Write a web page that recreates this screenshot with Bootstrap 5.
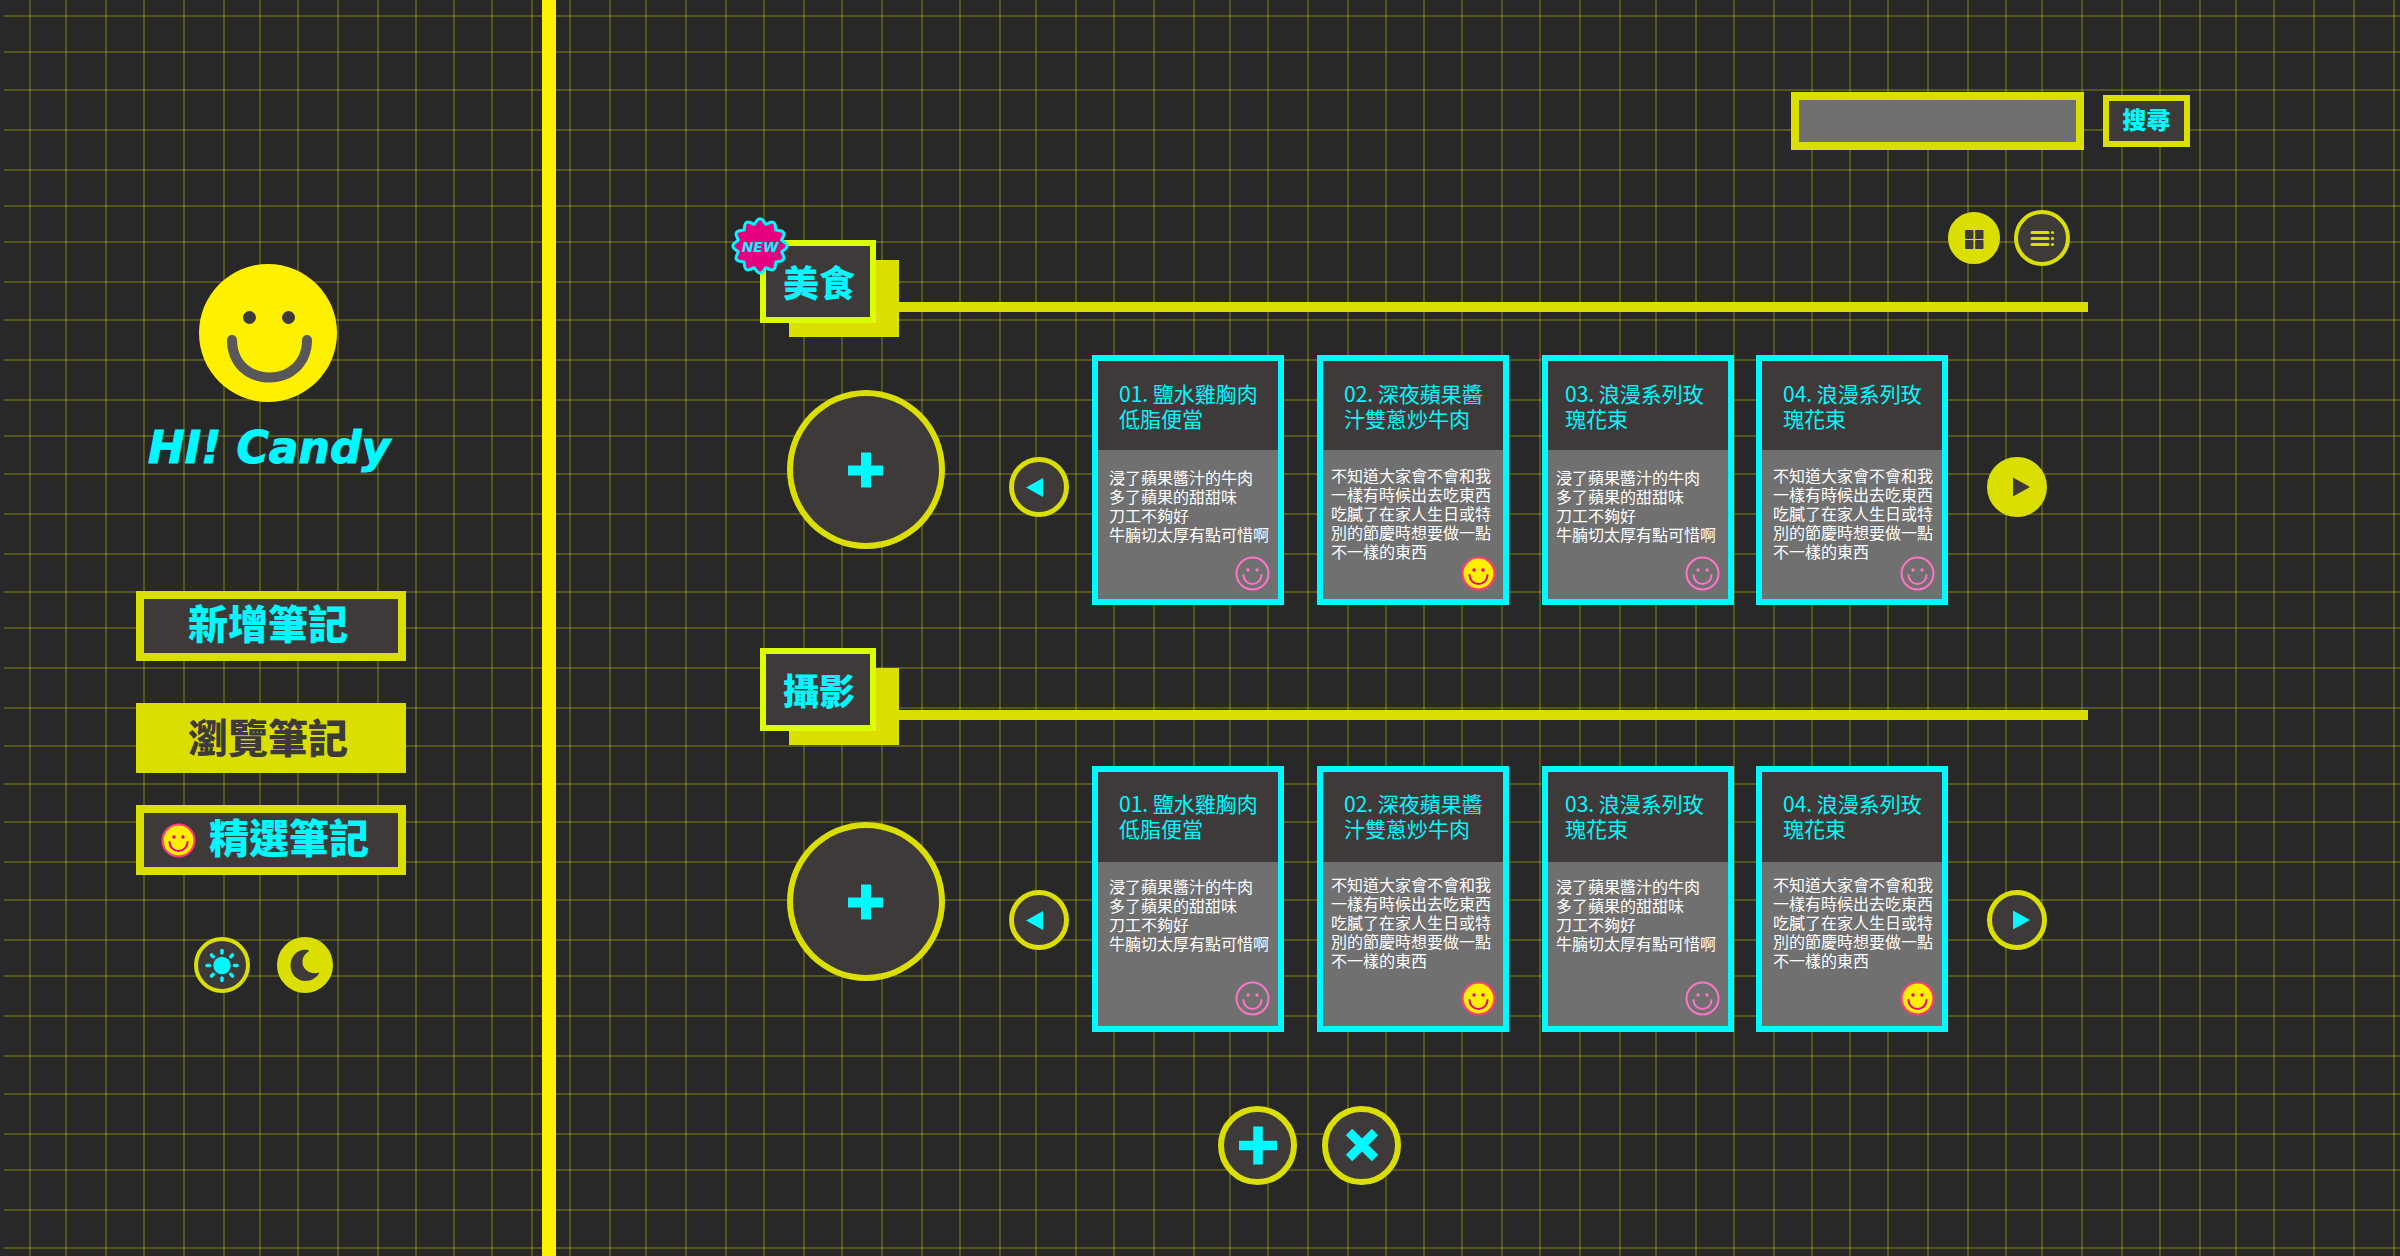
<!DOCTYPE html>
<html lang="zh-Hant">
<head>
<meta charset="utf-8">
<meta name="viewport" content="width=device-width, initial-scale=1">
<title>Candy 筆記</title>
<link href="https://cdn.jsdelivr.net/npm/bootstrap@5.3.0/dist/css/bootstrap.min.css" rel="stylesheet">
<style>
:root { --ink:#282828; --coal:#3e3a39; --lime:#dbdf00; --neon:#dcff00; --sun:#fff000; --aqua:#00f8ff; --ash:#717071; }
body { background:var(--ink); color:var(--aqua); font-family:"Noto Sans CJK TC","Noto Sans",sans-serif; }
.grid-bg { z-index:-1; }
.shell { min-height:100vh; }
.side { flex:0 0 556px; border-right:14px solid var(--sun); padding:264px 0 0 136px; }
.face-lg { width:138px; height:138px; margin-left:63px; }
.greet { font-family:"DejaVu Sans","Liberation Sans",sans-serif; font-weight:700; font-style:italic; font-size:44px; line-height:56px; margin:18px 0 0 12px; -webkit-text-stroke:1px var(--aqua); }
.side-nav { width:270px; margin-top:115px; }
.side-link { height:70px; border:8px solid var(--lime); background:var(--coal); color:var(--aqua); font-weight:900; font-size:40px; line-height:46px; padding:0 0 8px 44px; text-decoration:none; margin-bottom:42px; }
.side-link.current { background:var(--lime); color:var(--coal); padding-bottom:4px; margin-bottom:32px; }
.side-link.pick { padding:0 0 8px 17px; gap:13px; margin-bottom:62px; }
.pick svg { width:35px; height:35px; margin-top:8px; }
.round { border:5px solid var(--lime); border-radius:50%; background:var(--coal); color:var(--aqua); padding:0; display:block; flex:none; }
.round svg { display:block; width:100%; height:100%; }
.round.solid { background:var(--lime); color:var(--coal); }
.r56 { width:56px; height:56px; border-width:4px; }
.r52 { width:52px; height:52px; border-width:4px; }
.r60 { width:60px; height:60px; }
.r80 { width:79px; height:79px; border-width:6px; }
.r158 { width:158px; height:159px; border-width:6px; }
.themes { gap:27px; padding-left:58px; }
.main { min-width:0; padding:92px 210px 70px 204px; }
.find { gap:19px; }
.find-box { width:293px; height:58px; border:8px solid var(--lime); border-radius:0; background:var(--ash); color:#fff; padding:0 12px; }
.find-btn { width:87px; height:52px; border:6px solid var(--lime); background:var(--coal); color:var(--aqua); font-weight:900; font-size:24px; line-height:36px; padding:0 0 4px; }
.views { gap:14px; margin:60px 120px 0 0; z-index:1; }
.board { margin:-26px 102px 0 0; }
.board + .board { margin-top:43px; }
.board-tag { width:116px; height:83px; border:6px solid var(--neon); background:var(--coal); box-shadow:26px 17px 0 -3px var(--lime); font-weight:900; font-size:36px; line-height:1; margin:0; padding:0 0 2px 2px; z-index:1; }
.board-rule { height:10px; background:var(--lime); margin-top:62px; }
.new-badge { width:60px; height:60px; left:-36px; top:-30px; }
.new-badge text { font:italic 700 14px "DejaVu Sans","Liberation Sans",sans-serif; fill:var(--aqua); }
.shelf { padding:32px 41px 0 27px; }
.shelf .add { margin:35px 64px 0 0; }
.shelf .step { margin-top:102px; }
.shelf .cards { margin:0 39px 0 23px; }
.note { width:192px; height:250px; border:6px solid var(--aqua); background:var(--ash); margin-right:33px; }
.note:nth-child(3) { margin-right:22px; }
.note:last-child { margin-right:0; }
.note-top { height:89px; background:var(--coal); color:var(--aqua); font-size:21px; font-weight:400; line-height:25px; padding:20px 0 0 21px; margin:0; }
.note:nth-child(3) .note-top { padding-left:17px; }
.note-text { color:#fff; font-size:16px; font-weight:400; line-height:19px; padding:18px 0 0 11px; margin:0; white-space:nowrap; }
.note:nth-child(2n) .note-text { padding-top:16px; }
.note:nth-child(2) .note-text, .note:nth-child(3) .note-text { padding-left:8px; }
.fav { width:35px; height:35px; right:8px; bottom:8px; border:0; background:none; padding:0; }
.note:nth-child(2n) .fav { right:7px; }
.fav svg { display:block; }
.tall .add { margin-top:56px; }
.tall .step { margin-top:124px; }
.tall { padding-top:35px; }
.tall .note { height:266px; }
.tall .note-top { height:90px; padding-top:19px; }
.tall .note-text { padding-top:15px; }
.tall .note:nth-child(2n) .note-text { padding-top:13px; }
.tall .fav { bottom:10px; }
.foot { gap:25px; padding:74px 0 0 458px; }
</style>
</head>
<body>
<svg class="d-none">
  <symbol id="smile-line" viewBox="0 0 35 35"><circle cx="17.500" cy="17.500" r="16" fill="none" stroke="#ff73c8" stroke-width="2"/><circle cx="13" cy="14" r="1.700" fill="#ff73c8"/><circle cx="22" cy="14" r="1.700" fill="#ff73c8"/><path d="M8.500 19a9 9 0 0 0 18 0" fill="none" stroke="#ff73c8" stroke-width="2" stroke-linecap="round"/></symbol>
  <symbol id="smile-full" viewBox="0 0 35 35"><circle cx="17.500" cy="17.500" r="16" fill="#fff000" stroke="#ff3c78" stroke-width="2.200"/><circle cx="13" cy="14" r="1.700" fill="#e4007f"/><circle cx="22" cy="14" r="1.700" fill="#e4007f"/><path d="M8.500 19a9 9 0 0 0 18 0" fill="none" stroke="#e4007f" stroke-width="2" stroke-linecap="round"/></symbol>
  <symbol id="tri-left" viewBox="0 0 50 50"><path d="M12 25.500 29 16v19z" fill="currentColor"/></symbol>
  <symbol id="tri-right" viewBox="0 0 50 50"><path d="M38 25 21 15.500v19z" fill="currentColor"/></symbol>
</svg>
<svg class="grid-bg position-absolute top-0 start-0 w-100 h-100" aria-hidden="true">
  <defs><pattern id="net" width="2400" height="1256" patternUnits="userSpaceOnUse">
    <g id="net-lines" fill="none" stroke="#dbdf00" stroke-opacity=".25" stroke-width="2"></g>
  </pattern></defs>
  <rect width="100%" height="100%" fill="url(#net)"/>
</svg>

<div class="shell d-flex">
  <aside class="side">
    <svg class="face-lg d-block" viewBox="0 0 138 138" role="img" aria-label="Candy"><circle cx="69" cy="69" r="69" fill="#fff000"/><circle cx="50.500" cy="53.500" r="6.500" fill="#3e3a39"/><circle cx="89.500" cy="53.500" r="6.500" fill="#3e3a39"/><path d="M28 76a5 5 0 0 1 10 0C38 97 53 108.500 70.500 108.500S103 97 103 76a5 5 0 0 1 10 0C113 102 94 118.500 70.500 118.500S28 102 28 76z" fill="#595757"/></svg>
    <h1 class="greet">HI! Candy</h1>
    <nav class="side-nav">
      <a href="#" class="side-link d-flex align-items-center">新增筆記</a>
      <a href="#" class="side-link current d-flex align-items-center" aria-current="page">瀏覽筆記</a>
      <a href="#" class="side-link pick d-flex align-items-center"><svg><use href="#smile-full"/></svg>精選筆記</a>
    </nav>
    <div class="themes d-flex">
      <button type="button" class="round r56" aria-label="淺色"><svg viewBox="0 0 48 48"><circle cx="24" cy="24.500" r="8.700" fill="currentColor"/><g stroke="currentColor" stroke-width="3.600" stroke-linecap="round"><path d="M24 9.500v2.500M24 37v2.500M9 24.500h2.500M36.500 24.500H39M13.500 14l1.700 1.700M32.800 33.300l1.700 1.700M34.500 14l-1.700 1.700M15.200 33.300 13.500 35"/></g></svg></button>
      <button type="button" class="round solid r56" aria-label="深色"><svg viewBox="0 0 48 48"><path d="M27 9C16 7 9.500 16 9.500 24.500 9.500 33 16 40 24.500 40c6 0 11-3 14-8.500-8 2.500-17-2-17-10.500 0-5 2.500-8 6.500-11z" fill="currentColor"/></svg></button>
    </div>
  </aside>

  <main class="main flex-grow-1">
    <form class="find d-flex justify-content-end align-items-center">
      <input type="search" class="find-box" aria-label="搜尋筆記">
      <button type="button" class="find-btn">搜尋</button>
    </form>
    <div class="views d-flex justify-content-end align-items-center position-relative">
      <button type="button" class="round solid r52" aria-label="格狀"><svg viewBox="0 0 44 44"><g fill="currentColor"><rect x="13" y="14" width="8.500" height="9" rx="1"/><rect x="23" y="14" width="8.500" height="9" rx="1"/><rect x="13" y="24" width="8.500" height="9" rx="1"/><rect x="23" y="24" width="8.500" height="9" rx="1"/></g></svg></button>
      <button type="button" class="round r56" aria-label="清單"><svg viewBox="0 0 48 48"><g stroke="#dbdf00" stroke-width="3" stroke-linecap="round"><path d="M14 18.500h16M14 24.500h16M14 30.500h16M34.500 18.500h.1M34.500 24.500h.1M34.500 30.500h.1"/></g></svg></button>
    </div>

    <section class="board">
      <div class="d-flex align-items-start">
        <h2 class="board-tag d-flex align-items-center justify-content-center position-relative">美食
          <svg class="new-badge position-absolute" viewBox="0 0 60 60"><path id="burst" fill="#e4007f" stroke="#00f8ff" stroke-width="3" stroke-linejoin="round"/><text x="30" y="36" text-anchor="middle">NEW</text></svg>
        </h2>
        <div class="board-rule flex-grow-1"></div>
      </div>
      <div class="shelf d-flex align-items-start">
        <button type="button" class="add round r158" aria-label="新增"><svg viewBox="0 0 146 146"><path d="M73 56v35M55 74h35" stroke="currentColor" stroke-width="10"/></svg></button>
        <button type="button" class="step round r60" aria-label="上一頁"><svg><use href="#tri-left"/></svg></button>
        <div class="cards d-flex flex-grow-1">
          <article class="note position-relative"><h3 class="note-top">01. 鹽水雞胸肉<br>低脂便當</h3><p class="note-text">浸了蘋果醬汁的牛肉<br>多了蘋果的甜甜味<br>刀工不夠好<br>牛腩切太厚有點可惜啊</p><button type="button" class="fav position-absolute" aria-label="精選"><svg width="35" height="35"><use href="#smile-line"/></svg></button></article>
          <article class="note position-relative"><h3 class="note-top">02. 深夜蘋果醬<br>汁雙蔥炒牛肉</h3><p class="note-text">不知道大家會不會和我<br>一樣有時候出去吃東西<br>吃膩了在家人生日或特<br>別的節慶時想要做一點<br>不一樣的東西</p><button type="button" class="fav position-absolute" aria-label="精選"><svg width="35" height="35"><use href="#smile-full"/></svg></button></article>
          <article class="note position-relative"><h3 class="note-top">03. 浪漫系列玫<br>瑰花束</h3><p class="note-text">浸了蘋果醬汁的牛肉<br>多了蘋果的甜甜味<br>刀工不夠好<br>牛腩切太厚有點可惜啊</p><button type="button" class="fav position-absolute" aria-label="精選"><svg width="35" height="35"><use href="#smile-line"/></svg></button></article>
          <article class="note position-relative"><h3 class="note-top">04. 浪漫系列玫<br>瑰花束</h3><p class="note-text">不知道大家會不會和我<br>一樣有時候出去吃東西<br>吃膩了在家人生日或特<br>別的節慶時想要做一點<br>不一樣的東西</p><button type="button" class="fav position-absolute" aria-label="精選"><svg width="35" height="35"><use href="#smile-line"/></svg></button></article>
        </div>
        <button type="button" class="step round solid r60" aria-label="下一頁"><svg><use href="#tri-right"/></svg></button>
      </div>
    </section>

    <section class="board">
      <div class="d-flex align-items-start">
        <h2 class="board-tag d-flex align-items-center justify-content-center position-relative">攝影</h2>
        <div class="board-rule flex-grow-1"></div>
      </div>
      <div class="shelf tall d-flex align-items-start">
        <button type="button" class="add round r158" aria-label="新增"><svg viewBox="0 0 146 146"><path d="M73 56v35M55 74h35" stroke="currentColor" stroke-width="10"/></svg></button>
        <button type="button" class="step round r60" aria-label="上一頁"><svg><use href="#tri-left"/></svg></button>
        <div class="cards d-flex flex-grow-1">
          <article class="note position-relative"><h3 class="note-top">01. 鹽水雞胸肉<br>低脂便當</h3><p class="note-text">浸了蘋果醬汁的牛肉<br>多了蘋果的甜甜味<br>刀工不夠好<br>牛腩切太厚有點可惜啊</p><button type="button" class="fav position-absolute" aria-label="精選"><svg width="35" height="35"><use href="#smile-line"/></svg></button></article>
          <article class="note position-relative"><h3 class="note-top">02. 深夜蘋果醬<br>汁雙蔥炒牛肉</h3><p class="note-text">不知道大家會不會和我<br>一樣有時候出去吃東西<br>吃膩了在家人生日或特<br>別的節慶時想要做一點<br>不一樣的東西</p><button type="button" class="fav position-absolute" aria-label="精選"><svg width="35" height="35"><use href="#smile-full"/></svg></button></article>
          <article class="note position-relative"><h3 class="note-top">03. 浪漫系列玫<br>瑰花束</h3><p class="note-text">浸了蘋果醬汁的牛肉<br>多了蘋果的甜甜味<br>刀工不夠好<br>牛腩切太厚有點可惜啊</p><button type="button" class="fav position-absolute" aria-label="精選"><svg width="35" height="35"><use href="#smile-line"/></svg></button></article>
          <article class="note position-relative"><h3 class="note-top">04. 浪漫系列玫<br>瑰花束</h3><p class="note-text">不知道大家會不會和我<br>一樣有時候出去吃東西<br>吃膩了在家人生日或特<br>別的節慶時想要做一點<br>不一樣的東西</p><button type="button" class="fav position-absolute" aria-label="精選"><svg width="35" height="35"><use href="#smile-full"/></svg></button></article>
        </div>
        <button type="button" class="step round r60" aria-label="下一頁"><svg><use href="#tri-right"/></svg></button>
      </div>
    </section>

    <div class="foot d-flex">
      <button type="button" class="round r80" aria-label="新增"><svg viewBox="0 0 67 67"><path d="M34 14.500v38M15 33.500h38" stroke="currentColor" stroke-width="9.500"/></svg></button>
      <button type="button" class="round r80" aria-label="關閉"><svg viewBox="0 0 67 67"><path d="m21 20 26 26M47 20 21 46" stroke="currentColor" stroke-width="9"/></svg></button>
    </div>
  </main>
</div>
<script src="https://cdn.jsdelivr.net/npm/bootstrap@5.3.0/dist/js/bootstrap.bundle.min.js"></script>
<script>
// Graph-paper lines: uneven spacing, listed by centre
const cols = [30,66,106,144,184,224,260,298,338,378,416,454,492,532,570,610,646,686,726,764,804,842,882,922,960,1000,1036,1076,1114,1154,1194,1230,1268,1308,1348,1386,1424,1462,1502,1540,1580,1620,1656,1696,1734,1774,1812,1850,1888,1928,1968,2006,2042,2082,2122,2160,2200,2236,2274,2314,2354,2394];
const rows = [16,52,90,130,170,206,242,282,320,360,400,436,474,514,554,592,628,668,708,746,784,822,862,900,940,976,1016,1056,1094,1134,1170,1210,1248];
const seg = d => { const p = document.createElementNS('http://www.w3.org/2000/svg', 'path'); p.setAttribute('d', d); return p; };
document.getElementById('net-lines').append(
  seg(cols.map(x => `M${x} 0V1256`).join('')),
  seg(rows.map(y => `M4 ${y}H2400`).join('')));
// Twelve-point starburst with rounded tips
const pt = (deg, r) => { const a = deg * Math.PI / 180; return (30 + r * Math.sin(a)).toFixed(1) + ' ' + (30 - r * Math.cos(a)).toFixed(1); };
let d = '';
for (let i = 0; i < 12; i++) {
  const a = i * 30;
  d += (i ? 'L' : 'M') + pt(a - 7, 25.5) + 'Q' + pt(a, 29) + ' ' + pt(a + 7, 25.5) + 'L' + pt(a + 15, 22.5);
}
document.getElementById('burst').setAttribute('d', d + 'Z');
</script>
</body>
</html>
